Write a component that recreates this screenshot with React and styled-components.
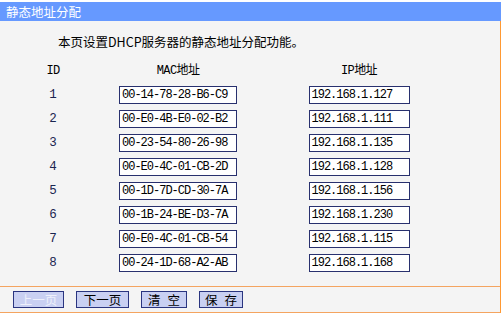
import React from "react";
import styled, { createGlobalStyle } from "styled-components";

const GlobalStyle = createGlobalStyle`
  html, body {
    margin: 0;
    padding: 0;
    background: #ffffff;
  }
  body {
    font-family: "Noto Sans CJK SC", "Liberation Sans", sans-serif;
    font-size: 12px;
    color: #000;
  }
`;

const Panel = styled.div`
  width: 501px;
  margin-top: 2px;
`;

const TitleBar = styled.div`
  height: 19px;
  line-height: 19px;
  padding-left: 6px;
  background: #6699ff;
  color: #ffffff;
  font-size: 12.5px;
`;

const Content = styled.div`
  background: #f4f4f4;
  border-right: 1px solid #ff9933;
`;

const Desc = styled.div`
  box-sizing: border-box;
  height: 38px;
  padding: 13px 0 0 58px;
  line-height: 16px;
  font-size: 12.5px;
`;

const Table = styled.div`
  display: grid;
  grid-template-columns: 106px 144px 218px;
  grid-auto-rows: 24px;
  align-items: center;
  justify-items: center;
`;

const HeadCell = styled.div`
  font-size: 12px;
  line-height: 16px;
  font-family: "Liberation Mono", "Noto Sans CJK SC", monospace;
  letter-spacing: -0.6px;
`;

const IdCell = styled.div`
  font-family: "Liberation Mono", monospace;
  font-size: 12.5px;
  color: #1a2550;
`;

const Field = styled.input`
  box-sizing: border-box;
  width: ${(p) => p.$w}px;
  height: 18px;
  margin: 0;
  padding: 0 1px 0 2px;
  border: 1px solid #28306e;
  background: #ffffff;
  color: #000;
  font-family: "Liberation Mono", monospace;
  font-size: 12px;
  letter-spacing: -1px;
  outline: none;
`;

const Divider = styled.div`
  height: 11px;
  border-bottom: 1px solid #f4a460;
`;

const ButtonBar = styled.div`
  display: flex;
  align-items: center;
  gap: 12px;
  height: 25px;
  padding-left: 13px;
  border-bottom: 1px solid #f4a460;
`;

const Button = styled.button`
  box-sizing: border-box;
  width: ${(p) => p.$w}px;
  height: 17px;
  margin: 0;
  padding: 0;
  border: 1px solid #2a3580;
  background: #c9d0f2;
  color: ${(p) => (p.disabled ? "#eef0fb" : "#000")};
  font-family: "Noto Sans CJK SC", sans-serif;
  font-size: 12.5px;
  line-height: 15px;
  word-spacing: 4px;
`;

const entries = [
  ["00-14-78-28-B6-C9", "192.168.1.127"],
  ["00-E0-4B-E0-02-B2", "192.168.1.111"],
  ["00-23-54-80-26-98", "192.168.1.135"],
  ["00-E0-4C-01-CB-2D", "192.168.1.128"],
  ["00-1D-7D-CD-30-7A", "192.168.1.156"],
  ["00-1B-24-BE-D3-7A", "192.168.1.230"],
  ["00-E0-4C-01-CB-54", "192.168.1.115"],
  ["00-24-1D-68-A2-AB", "192.168.1.168"],
];

export default function App() {
  return (
    <>
      <GlobalStyle />
      <Panel>
        <TitleBar>静态地址分配</TitleBar>
        <Content>
          <Desc>本页设置DHCP服务器的静态地址分配功能。</Desc>
          <Table>
            <HeadCell>ID</HeadCell>
            <HeadCell>MAC地址</HeadCell>
            <HeadCell>IP地址</HeadCell>
            {entries.map(([mac, ip], i) => (
              <React.Fragment key={mac}>
                <IdCell>{i + 1}</IdCell>
                <Field $w={118} defaultValue={mac} readOnly />
                <Field $w={101} defaultValue={ip} readOnly />
              </React.Fragment>
            ))}
          </Table>
          <Divider />
          <ButtonBar>
            <Button $w={51} disabled>上一页</Button>
            <Button $w={53}>下一页</Button>
            <Button $w={46}>清 空</Button>
            <Button $w={44}>保 存</Button>
          </ButtonBar>
        </Content>
      </Panel>
    </>
  );
}
